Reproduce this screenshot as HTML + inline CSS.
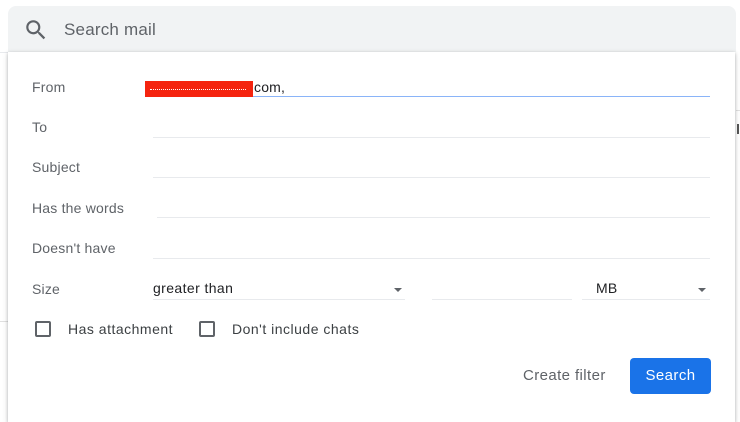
<!DOCTYPE html>
<html><head><style>
body{margin:0;width:740px;height:417px;background:#fff;position:relative;overflow:hidden;font-family:"Liberation Sans",Arial,sans-serif;letter-spacing:0.2px}
.a{position:absolute}
.lbl{position:absolute;left:32px;font-size:14px;color:#5f6368;line-height:16px}
.ln{position:absolute;height:1px;background:#e8eaed}
.cb{position:absolute;width:12px;height:12px;border:2px solid #5f6368;border-radius:2px;top:321px}
.ct{position:absolute;top:321px;font-size:14px;color:#3c4043;line-height:16px;letter-spacing:0.5px}
.arr{position:absolute;width:0;height:0;border-left:4px solid transparent;border-right:4px solid transparent;border-top:4px solid #5f6368}
</style></head><body>
<div class="a" style="left:0;top:52px;width:8px;height:1px;background:#e8eaed"></div>
<div class="a" style="left:0;top:321px;width:8px;height:1px;background:#e0e0e0"></div>
<div class="a" style="left:736px;top:110px;width:4px;height:1px;background:#e0e0e0"></div>
<div class="a" style="left:737px;top:124px;width:2px;height:10px;background:#555"></div>
<div class="a" style="left:8px;top:6px;width:728px;height:46px;background:#f1f3f4;border-radius:8px 8px 0 0"></div>
<svg class="a" style="left:23px;top:17px" width="26" height="26" viewBox="0 0 24 24"><path fill="#5f6368" d="M15.5 14h-.79l-.28-.27A6.47 6.47 0 0 0 16 9.5 6.5 6.5 0 1 0 9.5 16c1.61 0 3.09-.59 4.23-1.57l.27.28v.79l5 4.99L20.49 19l-4.99-5zm-6 0C7.01 14 5 11.99 5 9.5S7.01 5 9.5 5 14 7.01 14 9.5 11.99 14 9.5 14z"/></svg>
<div class="a" style="left:64px;top:20px;font-size:17px;color:#5f6368;line-height:20px">Search mail</div>
<div class="a" style="left:8px;top:52px;width:727px;height:370px;background:#fff;box-shadow:0 1px 3px rgba(60,64,67,.35),0 2px 6px rgba(60,64,67,.15)"></div>

<div class="lbl" style="top:79px">From</div>
<div class="a" style="left:145px;top:81px;width:108px;height:16px;background:#f5240f"></div>
<div class="a" style="left:150px;top:89px;width:96px;border-top:1px dotted #fff"></div>
<div class="a" style="left:254px;top:79px;font-size:14px;color:#202124;line-height:16px">com,</div>
<div class="a" style="left:253px;top:96px;width:457px;height:1px;background:#8ab4f8"></div>

<div class="lbl" style="top:119px">To</div>
<div class="ln" style="left:153px;top:137px;width:557px"></div>
<div class="lbl" style="top:159px">Subject</div>
<div class="ln" style="left:153px;top:177px;width:557px"></div>
<div class="lbl" style="top:200px">Has the words</div>
<div class="ln" style="left:157px;top:217px;width:553px"></div>
<div class="lbl" style="top:240px">Doesn't have</div>
<div class="ln" style="left:153px;top:258px;width:557px"></div>
<div class="lbl" style="top:281px">Size</div>
<div class="a" style="left:153px;top:280px;font-size:14px;color:#202124;line-height:16px;letter-spacing:0.4px">greater than</div>
<div class="arr" style="left:394px;top:288px"></div>
<div class="ln" style="left:153px;top:299px;width:252px"></div>
<div class="ln" style="left:432px;top:299px;width:140px"></div>
<div class="a" style="left:596px;top:280px;font-size:14px;color:#202124;line-height:16px">MB</div>
<div class="arr" style="left:698px;top:288px"></div>
<div class="ln" style="left:582px;top:299px;width:128px"></div>

<div class="cb" style="left:35px"></div>
<div class="ct" style="left:68px">Has attachment</div>
<div class="cb" style="left:199px"></div>
<div class="ct" style="left:232px">Don't include chats</div>

<div class="a" style="left:523px;top:367px;font-size:15px;color:#5f6368;line-height:17px;letter-spacing:0.4px">Create filter</div>
<div class="a" style="left:630px;top:358px;width:81px;height:36px;background:#1a73e8;border-radius:4px;color:#fff;font-size:15px;line-height:36px;text-align:center;letter-spacing:0.4px">Search</div>
</body></html>
